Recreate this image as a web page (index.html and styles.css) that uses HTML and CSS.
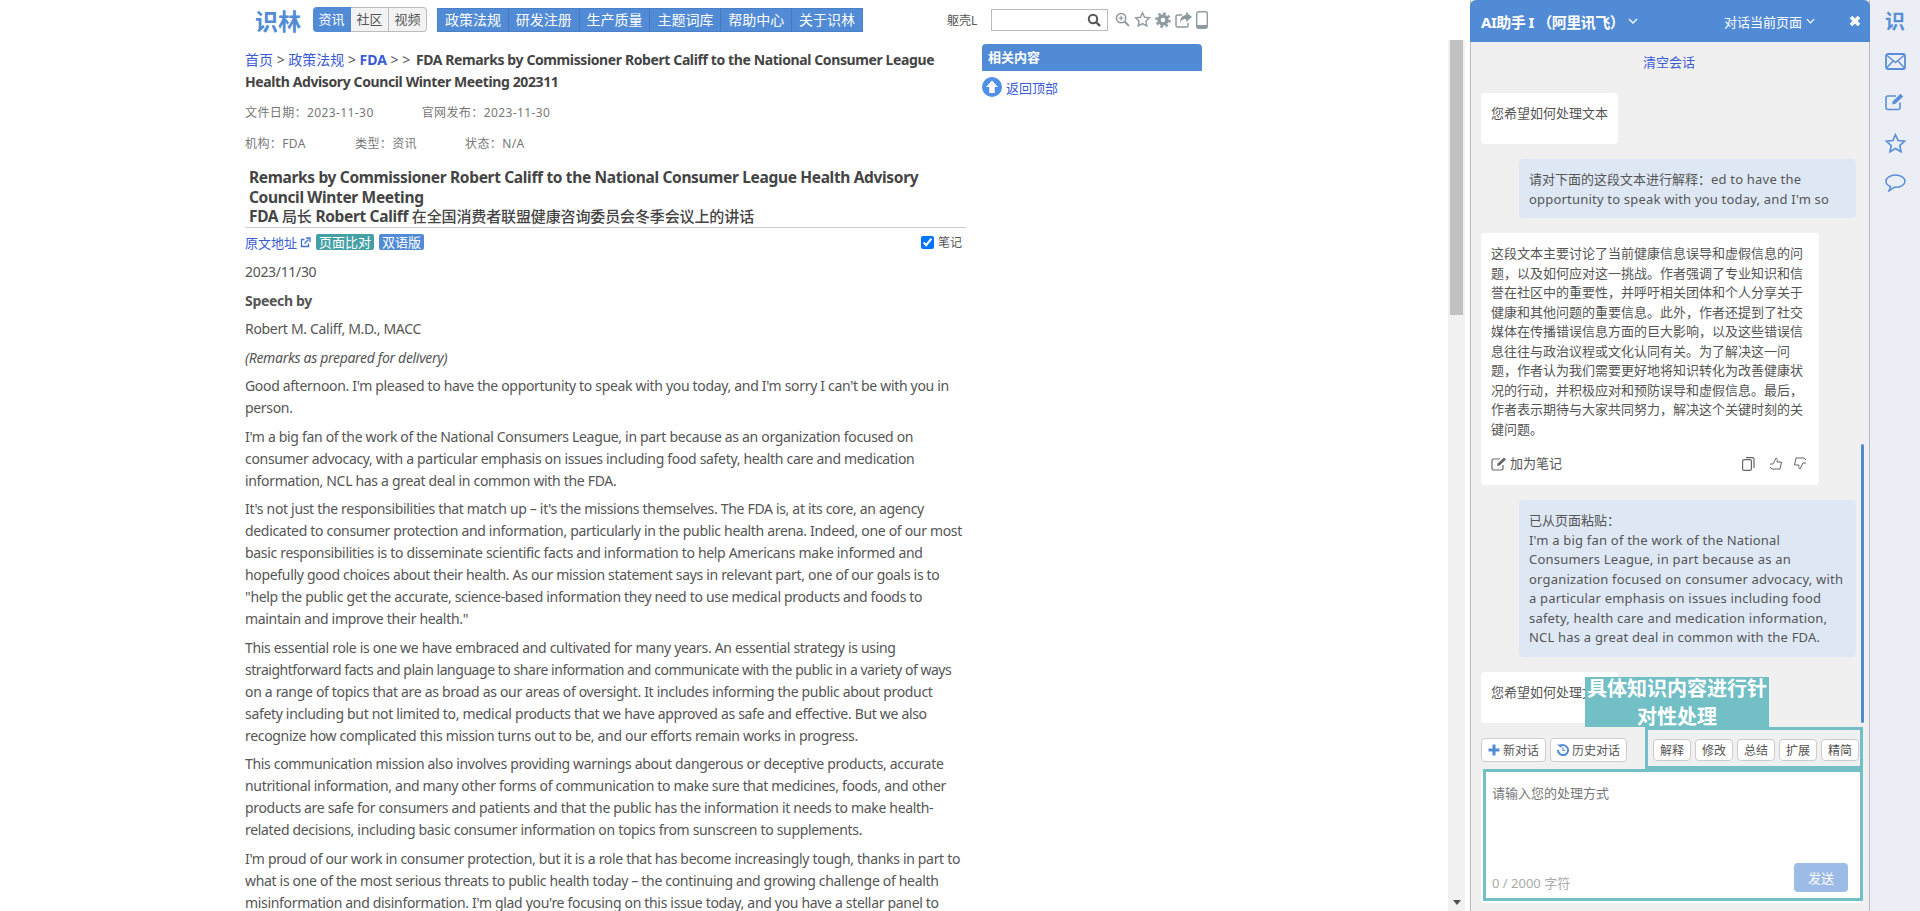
FILE: index.html
```html
<!DOCTYPE html>
<html lang="zh-CN">
  <head>
    <meta charset="UTF-8" />
    <title>识林</title>
    <link rel="stylesheet" href="styles.css">
  </head>
  <body>
    <div class="page">
      <!-- 主页面 -->
      <div class="main">
        <div class="topbar">
          <div class="logo">识林</div>
          <div class="tabs">
            <a class="tab on">资讯</a><a class="tab">社区</a><a class="tab">视频</a>
          </div>
          <div class="nav">
            <a>政策法规</a><a>研发注册</a><a>生产质量</a><a>主题词库</a><a>帮助中心</a><a>关于识林</a>
          </div>
          <span class="user">躯壳L</span>
          <div class="search">
            <svg width="14" height="14" viewBox="0 0 14 14"><circle cx="6" cy="6" r="4.2" fill="none" stroke="#555" stroke-width="2"/><path d="M9 9l4 4" stroke="#555" stroke-width="2.4"/></svg>
          </div>
          <div class="tools">
            <svg width="15" height="15" viewBox="0 0 16 16"><circle cx="6.5" cy="6.5" r="5" fill="none" stroke="#8e9aa0" stroke-width="1.6"/><path d="M4 6.5h5M6.5 4v5" stroke="#8e9aa0" stroke-width="1.3"/><path d="M10.2 10.2l4.6 4.6" stroke="#8e9aa0" stroke-width="2.2"/></svg>
            <svg width="17" height="17" viewBox="0 0 24 24"><path d="M12 2.5l2.9 6.3 6.9.8-5.1 4.7 1.4 6.8-6.1-3.4-6.1 3.4 1.4-6.8-5.1-4.7 6.9-.8z" fill="none" stroke="#8e9aa0" stroke-width="2"/></svg>
            <svg width="16" height="16" viewBox="0 0 16 16"><circle cx="8" cy="8" r="4" fill="none" stroke="#8e9aa0" stroke-width="3.4"/><circle cx="8" cy="8" r="6.6" fill="none" stroke="#8e9aa0" stroke-width="2.4" stroke-dasharray="2.6 2.58"/></svg>
            <svg width="17" height="16" viewBox="0 0 17 16"><path d="M7 3H2.5A1.5 1.5 0 0 0 1 4.5v9A1.5 1.5 0 0 0 2.500 15h9a1.500 1.500 0 0 0 1.500-1.500V11" fill="none" stroke="#8e9aa0" stroke-width="1.500"/><path d="M11 0l6 5-6 5V7C8 7 6 8 5 11c0-5 2-7.500 6-8z" fill="#8e9aa0"/></svg>
            <svg width="12" height="18" viewBox="0 0 12 18"><rect x="0.700" y="0.700" width="10.600" height="16.600" rx="1.800" fill="none" stroke="#8e9aa0" stroke-width="1.400"/><path d="M1 14h10v3H1z" fill="#8e9aa0"/></svg>
          </div>
        </div>

        <div class="content">
          <div class="article">
            <div class="crumb">
              <a>首页</a> &gt; <a>政策法规</a> &gt; <a class="strong">FDA</a> &gt; &gt; <b>FDA Remarks by Commissioner Robert Califf to the National Consumer League Health Advisory Council Winter Meeting 202311</b>
            </div>
            <div class="meta meta-date"><span>文件日期：2023-11-30</span><span>官网发布：2023-11-30</span></div>
            <div class="meta meta-org"><span>机构：FDA</span><span>类型：资讯</span><span>状态：N/A</span></div>
            <h1 class="title">Remarks by Commissioner Robert Califf to the National Consumer League Health Advisory Council Winter Meeting<br>FDA <span class="cn">局长</span> Robert Califf <span class="cn">在全国消费者联盟健康咨询委员会冬季会议上的讲话</span></h1>
            <div class="links">
              <a>原文地址</a>
              <svg class="ext" width="11" height="11" viewBox="0 0 11 11"><path d="M4.500 2.500H1.500v7h7v-3" fill="none" stroke="#3b6fd6" stroke-width="1.300"/><path d="M4.500 6.500l4-4M6 1h4v4" fill="none" stroke="#3b6fd6" stroke-width="1.300"/></svg>
              <span class="badge teal">页面比对</span>
              <span class="badge blue">双语版</span>
              <label class="note-check"><input type="checkbox" checked>笔记</label>
            </div>
            <p>2023/11/30</p>
            <p><b>Speech by</b></p>
            <p>Robert M. Califf, M.D., MACC</p>
            <p><i>(Remarks as prepared for delivery)</i></p>
            <p>Good afternoon. I'm pleased to have the opportunity to speak with you today, and I'm sorry I can't be with you in person.</p>
            <p>I'm a big fan of the work of the National Consumers League, in part because as an organization focused on consumer advocacy, with a particular emphasis on issues including food safety, health care and medication information, NCL has a great deal in common with the FDA.</p>
            <p>It's not just the responsibilities that match up – it's the missions themselves. The FDA is, at its core, an agency dedicated to consumer protection and information, particularly in the public health arena. Indeed, one of our most basic responsibilities is to disseminate scientific facts and information to help Americans make informed and hopefully good choices about their health. As our mission statement says in relevant part, one of our goals is to "help the public get the accurate, science-based information they need to use medical products and foods to maintain and improve their health."</p>
            <p class="lines">This essential role is one we have embraced and cultivated for many years. An essential strategy is using<br><span class="tight">straightforward facts and plain language to share information and communicate with the public in a variety of ways</span><br>on a range of topics that are as broad as our areas of oversight. It includes informing the public about product<br>safety including but not limited to, medical products that we have approved as safe and effective. But we also<br>recognize how complicated this mission turns out to be, and our efforts remain works in progress.</p>
            <p>This communication mission also involves providing warnings about dangerous or deceptive products, accurate nutritional information, and many other forms of communication to make sure that medicines, foods, and other products are safe for consumers and patients and that the public has the information it needs to make health-related decisions, including basic consumer information on topics from sunscreen to supplements.</p>
            <p>I'm proud of our work in consumer protection, but it is a role that has become increasingly tough, thanks in part to what is one of the most serious threats to public health today – the continuing and growing challenge of health misinformation and disinformation. I'm glad you're focusing on this issue today, and you have a stellar panel to</p>
          </div>
          <div class="side">
            <div class="side-head">相关内容</div>
            <a class="to-top">
              <svg width="20" height="20" viewBox="0 0 20 20"><circle cx="10" cy="10" r="10" fill="#4f8fe6"/><path d="M10 3.500l6 6.500h-3.300v6H7.300v-6H4z" fill="#fff"/></svg>
              返回顶部
            </a>
          </div>
        </div>
      </div>

      <!-- 页面滚动条 -->
      <div class="scrollbar">
        <div class="thumb"></div>
        <div class="arrow"></div>
      </div>

      <!-- AI 助手 -->
      <div class="panel">
        <div class="panel-head">
          <span class="panel-title">AI助手 I （阿里讯飞）</span>
          <svg class="chev" width="10" height="6" viewBox="0 0 10 6"><path d="M1 1l4 4 4-4" fill="none" stroke="#fff" stroke-width="1.300"/></svg>
          <span class="panel-scope">对话当前页面</span>
          <svg class="chev-2" width="9" height="6" viewBox="0 0 10 6"><path d="M1 1l4 4 4-4" fill="none" stroke="#fff" stroke-width="1.300"/></svg>
          <svg class="close" width="12" height="12" viewBox="0 0 12 12"><path d="M2 2l8 8M10 2l-8 8" stroke="#fff" stroke-width="3.600"/></svg>
        </div>
        <a class="clear">清空会话</a>
        <div class="msgs">
          <div class="msg bot short">您希望如何处理文本</div>
          <div class="msg me"><span class="cn">请对下面的这段文本进行解释：</span>ed to have the opportunity to speak with you today, and I'm so</div>
          <div class="msg bot long">
            这段文本主要讨论了当前健康信息误导和虚假信息的问题，以及如何应对这一挑战。作者强调了专业知识和信誉在社区中的重要性，并呼吁相关团体和个人分享关于健康和其他问题的重要信息。此外，作者还提到了社交媒体在传播错误信息方面的巨大影响，以及这些错误信息往往与政治议程或文化认同有关。为了解决这一问题，作者认为我们需要更好地将知识转化为改善健康状况的行动，并积极应对和预防误导和虚假信息。最后，作者表示期待与大家共同努力，解决这个关键时刻的关键问题。
            <div class="msg-actions">
              <svg width="16" height="14" viewBox="0 0 16 14"><path d="M12 8v3.500a1.500 1.500 0 0 1-1.500 1.500h-8A1.500 1.500 0 0 1 1 11.500v-8A1.500 1.500 0 0 1 2.500 2H9" fill="none" stroke="#666" stroke-width="1.200"/><path d="M6 9l.6-2.500L13 .5l2 2-6.400 6z" fill="#666"/></svg>
              <span class="add-note">加为笔记</span>
              <svg class="act-copy" width="13" height="14" viewBox="0 0 13 14"><rect x="0.600" y="2.600" width="8.800" height="10.800" rx="1.500" fill="none" stroke="#666" stroke-width="1.200"/><path d="M4 .6h6.500A1.500 1.500 0 0 1 12 2v9" fill="none" stroke="#666" stroke-width="1.200"/></svg>
              <svg class="act-up" width="14" height="13" viewBox="0 0 14 13"><path d="M1 7h3l3-6c1.500.5 1.500 2 1 4h4.500L11 12H3L1 10" fill="none" stroke="#666" stroke-width="1"/></svg>
              <svg class="act-down" width="14" height="13" viewBox="0 0 14 13"><path d="M13 6h-3l-3 6c-1.500-.5-1.500-2-1-4H1.500L3 1h8l2 2" fill="none" stroke="#666" stroke-width="1"/></svg>
            </div>
          </div>
          <div class="msg me"><span class="cn">已从页面粘贴：</span><br>I'm a big fan of the work of the National Consumers League, in part because as an organization focused on consumer advocacy, with a particular emphasis on issues including food safety, health care and medication information, NCL has a great deal in common with the FDA.</div>
          <div class="msg bot short">您希望如何处理文本</div>
          <div class="msgs-bar"></div>
        </div>
        <div class="toolbar">
          <button class="tool-btn">
            <svg width="12" height="12" viewBox="0 0 12 12"><path d="M6 0.500v11M0.500 6h11" stroke="#528bd5" stroke-width="3"/></svg>新对话
          </button>
          <button class="tool-btn">
            <svg width="12" height="12" viewBox="0 0 12 12"><path d="M2.500 2.500A5 5 0 1 1 1 6" fill="none" stroke="#528bd5" stroke-width="2"/><path d="M0 .5h4.500V4z" fill="#528bd5"/><path d="M6 3.500V6.500h2" fill="none" stroke="#528bd5" stroke-width="1.200"/></svg>历史对话
          </button>
          <div class="quick">
            <button>解释</button><button>修改</button><button>总结</button><button>扩展</button><button>精简</button>
          </div>
        </div>
        <div class="input-box">
          <div class="placeholder">请输入您的处理方式</div>
          <div class="input-foot">
            <span class="counter">0 / 2000 字符</span>
            <button class="send">发送</button>
          </div>
        </div>

        <!-- 标注 -->
        <div class="mark-label"><div class="mark-text">具体知识内容进行针对性处理</div></div>
        <div class="mark-quick"></div>
        <div class="mark-input"></div>
      </div>

      <!-- 右侧图标栏 -->
      <div class="rail">
        <div class="rail-item rail-text">识</div>
        <div class="rail-item"><svg width="21" height="17" viewBox="0 0 21 17"><rect x="1" y="1" width="19" height="15" rx="2" fill="none" stroke="#5a8fd8" stroke-width="1.800"/><path d="M1.500 2l9 7.500 9-7.500M1.500 15l6.500-7M19.500 15L13 8" fill="none" stroke="#5a8fd8" stroke-width="1.500"/></svg></div>
        <div class="rail-item"><svg width="21" height="18" viewBox="0 0 21 18"><path d="M15 9.500V14.500A2 2 0 0 1 13 16.500H3A2 2 0 0 1 1 14.500V5A2 2 0 0 1 3 3H11" fill="none" stroke="#5a8fd8" stroke-width="1.600"/><path d="M7 11.500l.8-3.300L15.500 .8l2.700 2.600-7.700 7.400z" fill="#5a8fd8"/></svg></div>
        <div class="rail-item"><svg width="21" height="20" viewBox="0 0 24 23"><path d="M12 2l3 6.700 7.300.8-5.400 4.900 1.500 7.200L12 17.900l-6.400 3.700 1.500-7.200L1.700 9.500 9 8.700z" fill="none" stroke="#5a8fd8" stroke-width="1.900"/></svg></div>
        <div class="rail-item"><svg width="21" height="18" viewBox="0 0 21 18"><path d="M10.500 1C5.300 1 1 3.700 1 7.200c0 2.300 1.800 4.200 4.500 5.300L4 16.800l5.300-3.500h1.200c5.200 0 9.500-2.700 9.500-6.100S15.700 1 10.500 1z" fill="none" stroke="#5a8fd8" stroke-width="1.500"/></svg></div>
      </div>
    </div>
  </body>
</html>
```

FILE: styles.css
```css
html, body {
  margin: 0;
  padding: 0;
  height: 100%;
  overflow: hidden;
  background: #fff;
}
body {
  font-family: "Noto Sans", "Noto Sans CJK SC", sans-serif;
  font-size: 14px;
  color: #555;
}
svg {
  display: block;
  flex: none;
}
button {
  font-family: inherit;
  cursor: pointer;
}
.page {
  display: flex;
  height: 911px;
  overflow: hidden;
}

/* 主页面 */
.main {
  width: 1448px;
  flex: none;
  box-sizing: border-box;
  padding-left: 245px;
  overflow: hidden;
}
.topbar {
  display: flex;
  align-items: center;
  height: 38px;
  padding-top: 1px;
  box-sizing: border-box;
}
.logo {
  width: 58px;
  margin-left: 10px;
  font-size: 23px;
  font-weight: bold;
  color: #528bd5;
}
.tabs {
  display: flex;
  width: 114px;
  height: 25px;
  margin-right: 10px;
}
.tab {
  flex: 1;
  text-align: center;
  font-size: 13px;
  line-height: 23px;
  background: #f3f3f3;
  border: 1px solid #bbb;
  border-left: none;
  color: #555;
}
.tab.on {
  background: #528bd5;
  color: #fff;
  border-color: #528bd5;
  border-radius: 4px 0 0 4px;
}
.tab:last-child {
  border-radius: 0 4px 4px 0;
}
.nav {
  display: flex;
  height: 24px;
  background: #528bd5;
  border: 1px solid #4a80c8;
  box-sizing: border-box;
  width: 426px;
}
.nav a {
  flex: 1;
  text-align: center;
  color: #fff;
  font-size: 14px;
  line-height: 22px;
  border-right: 1px solid #4277bd;
}
.nav a:last-child {
  border-right: none;
}
.user {
  margin-left: 84px;
  width: 44px;
  font-size: 12px;
}
.search {
  display: flex;
  align-items: center;
  justify-content: flex-end;
  box-sizing: border-box;
  width: 117px;
  height: 22px;
  padding-right: 6px;
  border: 1px solid #bbb;
}
.tools {
  display: flex;
  align-items: center;
  gap: 4px;
  margin-left: 7px;
}
.content {
  display: flex;
  align-items: flex-start;
}
.article {
  width: 721px;
  flex: none;
}
.article p {
  margin: 0 0 6.5px;
  line-height: 22px;
  letter-spacing: -0.32px;
}
.article p.lines {
  white-space: nowrap;
}
.tight {
  letter-spacing: -0.46px;
}
.crumb {
  margin-top: 11px;
  line-height: 22px;
}
.crumb a, .links a, .clear, .to-top {
  color: #3b5bd6;
}
.crumb a.strong {
  font-weight: bold;
}
.crumb b {
  margin-left: 2px;
  color: #444;
  letter-spacing: -0.39px;
}
.meta {
  display: flex;
  height: 18px;
  line-height: 18px;
  font-size: 12px;
  letter-spacing: 0.4px;
  color: #777;
}
.meta-date {
  margin-top: 11px;
  gap: 48px;
}
.meta-org {
  margin-top: 13px;
}
.meta-org span {
  width: 110px;
}
.title {
  height: 59px;
  margin: 15px 0 0;
  padding: 0 4px;
  font-size: 15.5px;
  line-height: 19.5px;
  font-weight: bold;
  letter-spacing: -0.34px;
  color: #444;
  border-bottom: 1px solid #ccc;
}
.title .cn {
  font-size: 15px;
  font-weight: 500;
  letter-spacing: -0.12px;
}
.links {
  display: flex;
  align-items: center;
  height: 16px;
  margin: 6px 0 11px;
  font-size: 13px;
}
.ext {
  margin: 0 5px 0 3px;
}
.badge {
  height: 16px;
  line-height: 16px;
  padding: 0 3px;
  border-radius: 2px;
  color: #fff;
  font-size: 13px;
  margin-right: 5px;
}
.teal {
  background: #45a0a5;
}
.blue {
  background: #528bd5;
}
.note-check {
  display: flex;
  align-items: center;
  margin-left: auto;
  margin-right: 4px;
  font-size: 12px;
}
.note-check input {
  width: 13px;
  height: 13px;
  margin: 0 4px 0 0;
}
.side {
  width: 220px;
  margin-left: 16px;
  margin-top: 6px;
}
.side-head {
  height: 27px;
  line-height: 27px;
  padding-left: 6px;
  background: #528bd5;
  color: #fff;
  font-weight: bold;
  font-size: 13px;
  border-radius: 4px 4px 0 0;
}
.to-top {
  display: flex;
  align-items: center;
  gap: 4px;
  margin-top: 6px;
  font-size: 13px;
}

/* 滚动条 */
.scrollbar {
  position: relative;
  width: 17px;
  flex: none;
  margin-top: 40px;
  background: #f1f1f1;
}
.thumb {
  width: 13px;
  height: 275px;
  margin-left: 2px;
  background: #c1c1c1;
}
.arrow {
  position: absolute;
  left: 5px;
  bottom: 6px;
  border: 4px solid transparent;
  border-top: 5px solid #505050;
  border-bottom: none;
}

/* AI 助手 */
.panel {
  position: relative;
  display: flex;
  flex-direction: column;
  box-sizing: border-box;
  width: 400px;
  flex: none;
  margin-left: 5px;
  background: #f0f0f1;
  border-left: 1px solid #bbb;
  border-right: 1px solid #bbb;
  font-size: 13px;
}
.panel-head {
  display: flex;
  align-items: center;
  height: 42px;
  margin: 0 -1px;
  padding: 0 9px 0 11px;
  background: #528bd5;
  border-radius: 6px 6px 0 0;
  color: #fff;
  flex: none;
}
.panel-title {
  font-weight: bold;
  font-size: 15px;
  letter-spacing: -0.5px;
}
.chev {
  margin-left: 4px;
}
.panel-scope {
  margin-left: auto;
  font-size: 13px;
}
.chev-2 {
  margin-left: 4px;
}
.close {
  margin-left: 34px;
}
.clear {
  text-align: center;
  line-height: 20px;
  margin-top: 10px;
  height: 20px;
  flex: none;
  margin-left: -2px;
}
.msgs {
  position: relative;
  height: 654px;
  box-sizing: border-box;
  padding: 21px 0 0 10px;
  flex: none;
  overflow: hidden;
}
.msg {
  box-sizing: border-box;
  margin-bottom: 15px;
  padding: 11px 10px 9px;
  border-radius: 4px;
  line-height: 19.5px;
}
.msg.bot {
  background: #fff;
}
.msg.short {
  width: 137px;
  height: 51px;
}
.msg.long {
  width: 338px;
  height: 252px;
}
.msg.me {
  width: 337px;
  margin-left: 38px;
  background: #dee8f5;
  letter-spacing: 0.2px;
}
.msg.me .cn {
  letter-spacing: 0;
}
.msg-actions {
  display: flex;
  align-items: center;
  margin-top: 15px;
}
.add-note {
  margin-left: 3px;
  font-size: 13px;
}
.act-copy {
  margin-left: auto;
  margin-right: 14px;
}
.act-up {
  margin-right: 10px;
}
.act-down {
  margin-right: 2px;
}
.msgs-bar {
  position: absolute;
  right: 5px;
  top: 372px;
  bottom: 3px;
  width: 3px;
  background: #528bd5;
  border-radius: 2px;
}
.toolbar {
  display: flex;
  align-items: center;
  gap: 4px;
  height: 24px;
  margin-top: 12px;
  padding-left: 10px;
  flex: none;
}
.tool-btn {
  display: flex;
  align-items: center;
  gap: 3px;
  height: 24px;
  padding: 0 6px;
  background: #fff;
  border: 1px solid #ccc;
  border-radius: 4px;
  color: #555;
  font-size: 12px;
}
.quick {
  display: flex;
  gap: 4px;
  margin-left: 22px;
}
.quick button {
  width: 38px;
  height: 22px;
  padding: 0;
  background: #fff;
  border: 1px solid #ccc;
  border-radius: 4px;
  color: #555;
  font-size: 12px;
}
.input-box {
  box-sizing: border-box;
  width: 381px;
  height: 132px;
  margin: 9px 0 0 10px;
  padding: 12px 11px 11px;
  background: #fff;
  border-radius: 4px;
  display: flex;
  flex-direction: column;
  justify-content: space-between;
  flex: none;
}
.placeholder {
  color: #777;
  font-size: 13px;
  line-height: 20px;
}
.input-foot {
  display: flex;
  align-items: center;
  justify-content: space-between;
  padding-right: 3px;
}
.counter {
  margin-top: 11px;
  color: #aaa;
  font-size: 13px;
}
.send {
  width: 54px;
  height: 29px;
  padding: 0;
  background: #9cbbe7;
  border: none;
  border-radius: 4px;
  color: #fff;
  font-size: 13px;
}

/* 标注 */
.mark-label {
  position: absolute;
  left: 114px;
  top: 677px;
  width: 184px;
  height: 50px;
  background: #73bfc6;
  color: #fff;
  font-size: 20px;
  font-weight: bold;
  line-height: 28px;
  text-align: center;
}
.mark-text {
  margin-top: -2px;
}
.mark-quick {
  position: absolute;
  left: 174px;
  top: 727px;
  width: 218px;
  height: 42px;
  box-sizing: border-box;
  border: 3px solid #73bfc6;
}
.mark-input {
  position: absolute;
  left: 12px;
  top: 769px;
  width: 380px;
  height: 132px;
  box-sizing: border-box;
  border: 3px solid #73bfc6;
}

/* 右侧图标栏 */
.rail {
  flex: 1;
  display: flex;
  flex-direction: column;
  align-items: center;
  background: #ebeff5;
}
.rail-item {
  display: flex;
  align-items: center;
  height: 40.75px;
}
.rail-text {
  font-size: 20px;
  font-weight: bold;
  color: #5a8fd8;
}
```
